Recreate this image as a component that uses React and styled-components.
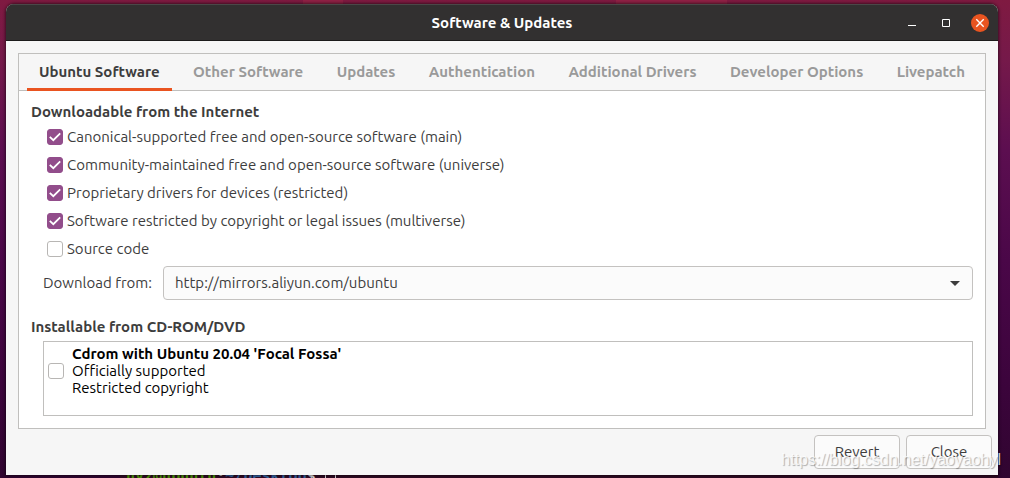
import { useState } from 'react';
import styled, { createGlobalStyle } from 'styled-components';

const GlobalStyle = createGlobalStyle`
  * {
    box-sizing: border-box;
  }

  body {
    margin: 0;
    font-family: Ubuntu, "Noto Sans", sans-serif;
    font-size: 15px;
    line-height: 20px;
    color: #3d3d3d;
  }

  button, input, select {
    font: inherit;
    color: inherit;
    margin: 0;
  }
`;

const Desktop = styled.div`
  position: relative;
  min-height: 100vh;
  padding: 4px 12px 3px 6px;
  display: flex;
  overflow: hidden;
  background:
    linear-gradient(90deg, transparent 30%, #8f2145 30%, #8f2145 34%, transparent 34%, transparent 61%, #8f2145 61%, #8f2145 72%, transparent 72%) top / 100% 4px no-repeat,
    linear-gradient(#7f1a41 0, #75194a 60px, #5c0e50 150px, #4a0748 260px, #3c043c 380px, #300530 100%);
`;

const Terminal = styled.div`
  position: absolute;
  left: 120px;
  right: 12px;
  bottom: -7px;
  padding-left: 6px;
  font: bold 15px/17px "DejaVu Sans Mono", monospace;
  color: #ddd;
  background: #300a24;
`;

const User = styled.span`
  color: #4e9a06;
`;

const Path = styled.span`
  color: #3465a4;
`;

const Cursor = styled.span`
  display: inline-block;
  width: 11px;
  height: 17px;
  border: 1px solid #ddd;
  vertical-align: top;
`;

const Window = styled.main`
  position: relative;
  flex: 1;
  min-width: 0;
  display: flex;
  flex-direction: column;
  border-radius: 8px 8px 0 0;
  overflow: hidden;
  background: #f6f6f6;
  box-shadow: 0 0 3px 1px rgba(0, 0, 0, 0.5);
`;

const TitleBar = styled.header`
  height: 37px;
  display: grid;
  grid-template-columns: 1fr auto 1fr;
  align-items: center;
  padding: 0 9px;
  background: #323030;
  border-top: 1px solid #4a4848;
  border-bottom: 1px solid #1c1b1b;
`;

const Title = styled.h1`
  grid-column: 2;
  margin: 0;
  font-size: 15px;
  font-weight: 600;
  color: #fff;
`;

const WindowControls = styled.div`
  display: flex;
  justify-content: flex-end;
  gap: 16px;
`;

const ControlButton = styled.button`
  width: 18px;
  height: 18px;
  padding: 0;
  border: 0;
  border-radius: 50%;
  background: ${({ $close }) => ($close ? '#e95420' : 'transparent')};

  svg {
    display: block;
  }
`;

const Content = styled.div`
  flex: 1;
  display: flex;
  flex-direction: column;
  padding: 12px 6px 6px 12px;
`;

const Notebook = styled.section`
  flex: 1;
  margin-right: 6px;
  border: 1px solid #c0bfbd;
  background: #fff;
`;

const TabList = styled.div`
  display: flex;
  justify-content: space-between;
  height: 37px;
  padding: 0 8px;
  background: #f6f6f6;
  box-shadow: inset 0 -1px #c0bfbd;
`;

const Tab = styled.button`
  padding: 2px 12px 0;
  border: 0;
  border-bottom: 3px solid ${({ $active }) => ($active ? '#e95420' : 'transparent')};
  background: none;
  font-weight: 600;
  color: ${({ $active }) => ($active ? '#3d3d3d' : '#9a9a9a')};
`;

const Panel = styled.div`
  padding: 11px 12px 12px;
`;

const Heading = styled.h2`
  margin: 0;
  font-size: 15px;
  line-height: 20px;
  font-weight: 600;
`;

const Options = styled.div`
  display: flex;
  flex-direction: column;
  padding: 1px 0 0 16px;
`;

const Option = styled.label`
  display: flex;
  align-items: center;
  gap: 4px;
  height: 28px;
`;

const CheckFrame = styled.span`
  display: grid;
  flex: none;

  > * {
    grid-area: 1 / 1;
  }

  svg {
    pointer-events: none;
  }
`;

const CheckInput = styled.input`
  appearance: none;
  width: 16px;
  height: 16px;
  border: 1px solid #b8b6b4;
  border-radius: 3px;
  background: #fff;

  &:checked {
    border-color: #924d8b;
    background: #924d8b;
  }
`;

const MirrorRow = styled.div`
  display: flex;
  align-items: center;
  gap: 12px;
  padding: 3px 0 0 12px;
`;

const MirrorLabel = styled.label`
  width: 108px;
  white-space: nowrap;
`;

const SelectFrame = styled.div`
  display: grid;
  flex: 1;
  align-items: center;

  > * {
    grid-area: 1 / 1;
  }

  svg {
    justify-self: end;
    margin-right: 13px;
    pointer-events: none;
  }
`;

const Select = styled.select`
  appearance: none;
  width: 100%;
  height: 34px;
  padding: 0 11px;
  border: 1px solid #c4c2c0;
  border-radius: 4px;
  background: #fbfbfb;
`;

const CdSection = styled.section`
  padding-top: 17px;
`;

const CdList = styled.div`
  height: 75px;
  margin: 4px 0 0 12px;
  border: 1px solid #c0bfbd;
  padding: 3px 4px;
`;

const CdItem = styled.label`
  display: flex;
  align-items: center;
  gap: 8px;
  line-height: 17px;
  color: #000;
`;

const CdText = styled.span`
  display: flex;
  flex-direction: column;
`;

const CdName = styled.strong`
  font-weight: 600;
`;

const Actions = styled.footer`
  display: flex;
  justify-content: flex-end;
  gap: 6px;
  padding-top: 6px;
`;

const ActionButton = styled.button`
  width: 86px;
  height: 34px;
  border: 1px solid #c4c2c0;
  border-radius: 4px;
  background: #fbfbfb;
`;

const Watermark = styled.div`
  position: absolute;
  right: 9px;
  bottom: 8px;
  font: 16px/20px "Liberation Sans", sans-serif;
  color: rgba(255, 255, 255, 0.8);
  text-shadow: 1px 1px 1px rgba(0, 0, 0, 0.3);
  pointer-events: none;
`;

const tabs = [
  'Ubuntu Software',
  'Other Software',
  'Updates',
  'Authentication',
  'Additional Drivers',
  'Developer Options',
  'Livepatch',
];

const sources = [
  { id: 'main', label: 'Canonical-supported free and open-source software (main)', enabled: true },
  { id: 'universe', label: 'Community-maintained free and open-source software (universe)', enabled: true },
  { id: 'restricted', label: 'Proprietary drivers for devices (restricted)', enabled: true },
  { id: 'multiverse', label: 'Software restricted by copyright or legal issues (multiverse)', enabled: true },
  { id: 'source', label: 'Source code', enabled: false },
];

const Checkbox = ({ checked, onChange }) => (
  <CheckFrame>
    <CheckInput type="checkbox" checked={checked} onChange={onChange} />
    {checked && (
      <svg width="16" height="16" viewBox="0 0 16 16" fill="none" stroke="#fff" strokeWidth="1.8">
        <path d="M2.8 7.8L6.3 11.2L13.2 4.4" />
      </svg>
    )}
  </CheckFrame>
);

export default function App() {
  const [activeTab, setActiveTab] = useState('Ubuntu Software');
  const [enabled, setEnabled] = useState(sources.filter((s) => s.enabled).map((s) => s.id));
  const [cdrom, setCdrom] = useState(false);

  const toggleSource = (id) => {
    setEnabled(enabled.includes(id) ? enabled.filter((item) => item !== id) : [...enabled, id]);
  };

  return (
    <>
      <GlobalStyle />
      <Desktop>
        <Terminal>
          <User>hyz@ubuntu</User>:<Path>~/Desktop</Path>$ <Cursor />
        </Terminal>

        <Window>
          <TitleBar>
            <Title>Software &amp; Updates</Title>
            <WindowControls>
              <ControlButton type="button" aria-label="Minimize">
                <svg width="18" height="18" fill="#fff"><path d="M5 11h8v1H5z" /></svg>
              </ControlButton>
              <ControlButton type="button" aria-label="Maximize">
                <svg width="18" height="18" fill="none" stroke="#fff"><path d="M5.5 5.5h7v7h-7z" /></svg>
              </ControlButton>
              <ControlButton type="button" aria-label="Close window" $close>
                <svg width="18" height="18" stroke="#fff" strokeWidth="1.4"><path d="M5.3 5.3l7.4 7.4M12.7 5.3l-7.4 7.4" /></svg>
              </ControlButton>
            </WindowControls>
          </TitleBar>

          <Content>
            <Notebook>
              <TabList role="tablist">
                {tabs.map((tab) => (
                  <Tab
                    key={tab}
                    type="button"
                    role="tab"
                    aria-selected={tab === activeTab}
                    $active={tab === activeTab}
                    onClick={() => setActiveTab(tab)}
                  >
                    {tab}
                  </Tab>
                ))}
              </TabList>

              <Panel role="tabpanel">
                <Heading>Downloadable from the Internet</Heading>
                <Options>
                  {sources.map(({ id, label }) => (
                    <Option key={id}>
                      <Checkbox checked={enabled.includes(id)} onChange={() => toggleSource(id)} />
                      {label}
                    </Option>
                  ))}
                </Options>

                <MirrorRow>
                  <MirrorLabel htmlFor="mirror">Download from:</MirrorLabel>
                  <SelectFrame>
                    <Select id="mirror">
                      <option>http://mirrors.aliyun.com/ubuntu</option>
                    </Select>
                    <svg width="10" height="5" fill="#3d3d3d"><path d="M0 0h10L5 5z" /></svg>
                  </SelectFrame>
                </MirrorRow>

                <CdSection>
                  <Heading>Installable from CD-ROM/DVD</Heading>
                  <CdList>
                    <CdItem>
                      <Checkbox checked={cdrom} onChange={(e) => setCdrom(e.target.checked)} />
                      <CdText>
                        <CdName>Cdrom with Ubuntu 20.04 'Focal Fossa'</CdName>
                        <span>Officially supported</span>
                        <span>Restricted copyright</span>
                      </CdText>
                    </CdItem>
                  </CdList>
                </CdSection>
              </Panel>
            </Notebook>

            <Actions>
              <ActionButton type="button">Revert</ActionButton>
              <ActionButton type="button">Close</ActionButton>
            </Actions>
          </Content>
        </Window>
        <Watermark>https://blog.csdn.net/yaoyaohyl</Watermark>
      </Desktop>
    </>
  );
}
